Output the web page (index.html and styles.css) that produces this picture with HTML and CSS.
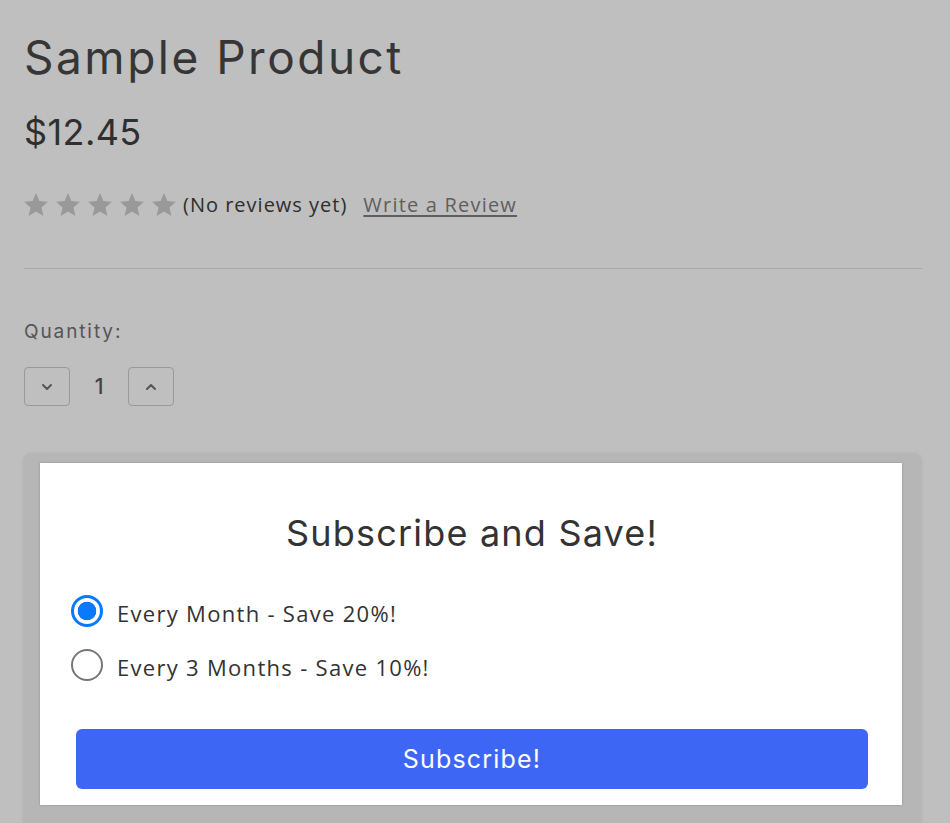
FILE: index.html
```html
<!DOCTYPE html>
<html lang="en">
<head>
<meta charset="utf-8">
<title>Sample Product</title>
<link rel="stylesheet" href="styles.css">
</head>
<body>
<main class="product">
  <h1 class="product-title">Sample Product</h1>
  <div class="product-price">$12.45</div>
  <div class="rating">
    <div class="stars">
      <svg class="star" viewBox="2 2 20 19"><path d="M12 17.27L18.18 21l-1.64-7.03L22 9.24l-7.19-.61L12 2 9.19 8.63 2 9.24l5.46 4.73L5.82 21z"/></svg>
      <svg class="star" viewBox="2 2 20 19"><path d="M12 17.27L18.18 21l-1.64-7.03L22 9.24l-7.19-.61L12 2 9.19 8.63 2 9.24l5.46 4.73L5.82 21z"/></svg>
      <svg class="star" viewBox="2 2 20 19"><path d="M12 17.27L18.18 21l-1.64-7.03L22 9.24l-7.19-.61L12 2 9.19 8.63 2 9.24l5.46 4.73L5.82 21z"/></svg>
      <svg class="star" viewBox="2 2 20 19"><path d="M12 17.27L18.18 21l-1.64-7.03L22 9.24l-7.19-.61L12 2 9.19 8.63 2 9.24l5.46 4.73L5.82 21z"/></svg>
      <svg class="star" viewBox="2 2 20 19"><path d="M12 17.27L18.18 21l-1.64-7.03L22 9.24l-7.19-.61L12 2 9.19 8.63 2 9.24l5.46 4.73L5.82 21z"/></svg>
    </div>
    <span class="review-count">(No reviews yet)</span>
    <a class="review-link" href="#">Write a Review</a>
  </div>
  <hr class="divider">
  <div class="quantity">
    <label class="quantity-label">Quantity:</label>
    <div class="quantity-control">
      <button class="qty-btn" type="button" aria-label="Decrease">
        <svg viewBox="0 0 12 8"><path d="M2 2l4 4 4-4"/></svg>
      </button>
      <span class="qty-value">1</span>
      <button class="qty-btn" type="button" aria-label="Increase">
        <svg viewBox="0 0 12 8"><path d="M2 6l4-4 4 4"/></svg>
      </button>
    </div>
  </div>
  <section class="subscribe-panel">
    <div class="subscribe-card">
      <h2 class="subscribe-title">Subscribe and Save!</h2>
      <label class="option">
        <input type="radio" name="plan" checked>
        <span>Every Month - Save 20%!</span>
      </label>
      <label class="option">
        <input type="radio" name="plan">
        <span>Every 3 Months - Save 10%!</span>
      </label>
      <button class="subscribe-btn" type="button">Subscribe!</button>
    </div>
  </section>
</main>
</body>
</html>
```
FILE: styles.css
```css
html, body {
  margin: 0;
  padding: 0;
  background: #bfbfbf;
  overflow: hidden;
}
body {
  font-family: "Inter", "Open Sans", sans-serif;
  color: #333;
}
.product {
  padding: 0 28px 0 24px;
}
.product-title {
  margin: 29px 0 0;
  font-family: "Inter", sans-serif;
  font-weight: 400;
  font-size: 46px;
  line-height: 56px;
  letter-spacing: 2.5px;
  color: #363636;
}
.product-price {
  margin-top: 25px;
  font-size: 36px;
  line-height: 44px;
  letter-spacing: 0.4px;
  color: #2f2f2f;
}
.rating {
  margin-top: 38px;
  height: 24px;
  display: flex;
  align-items: center;
}
.stars {
  display: flex;
  gap: 8px;
}
.star {
  flex: none;
  width: 24px;
  height: 23px;
  fill: #999;
}
.review-count {
  margin-left: 7px;
  font-family: "Open Sans", sans-serif;
  font-size: 20px;
  letter-spacing: 1px;
  color: #2e2e2e;
}
.review-link {
  margin-left: 16px;
  font-family: "Open Sans", sans-serif;
  font-size: 20px;
  letter-spacing: 1.2px;
  color: #5e5e5e;
  text-decoration: underline;
  text-underline-offset: 3px;
}
.divider {
  margin: 52px 0 0;
  border: 0;
  height: 1px;
  background: #a9a9a9;
}
.quantity {
  margin-top: 52px;
}
.quantity-label {
  display: block;
  font-size: 19px;
  line-height: 22px;
  letter-spacing: 1.9px;
  color: #555;
}
.quantity-control {
  margin-top: 24px;
  display: flex;
  align-items: center;
}
.qty-btn {
  width: 46px;
  height: 39px;
  padding: 0;
  border: 1.5px solid #999;
  border-radius: 4px;
  background: transparent;
  display: flex;
  align-items: center;
  justify-content: center;
}
.qty-btn svg {
  width: 12px;
  height: 8px;
  fill: none;
  stroke: #555;
  stroke-width: 2;
  stroke-linecap: round;
  stroke-linejoin: round;
}
.qty-value {
  width: 58px;
  text-align: center;
  font-size: 21px;
  font-weight: 500;
  color: #444;
}
.subscribe-panel {
  margin: 47px 0 0 -1px;
  padding: 10px 20px 40px 17px;
  background: #b6b6b6;
  border-radius: 8px;
  box-shadow: 0 0 3px #b6b6b6;
}
.subscribe-card {
  background: #fff;
  padding: 48px 34px 16px 36px;
  box-shadow: 0 0 2px rgba(0, 0, 0, 0.25);
}
.subscribe-title {
  margin: 0 0 29px;
  text-align: center;
  font-weight: 400;
  font-size: 36px;
  line-height: 44px;
  letter-spacing: 1.2px;
  color: #333;
}
.option {
  margin-left: -5px;
  height: 54px;
  display: flex;
  align-items: center;
  gap: 14px;
  font-family: "Open Sans", sans-serif;
  font-size: 22px;
  letter-spacing: 1.3px;
  color: #333;
}
.option span {
  padding-top: 4px;
}
.option input {
  appearance: none;
  margin: 0;
  width: 32px;
  height: 32px;
  border-radius: 50%;
  border: 2.5px solid #777;
  background: #fff;
  flex: none;
}
.option input:checked {
  border: 3px solid #0a78ff;
  background: radial-gradient(circle, #0a78ff 0 9px, #fff 9.6px);
}
.subscribe-btn {
  margin-top: 37px;
  width: 100%;
  height: 60px;
  border: 0;
  border-radius: 6px;
  background: #3e66f5;
  color: #fff;
  font-family: "Inter", sans-serif;
  font-size: 25px;
  letter-spacing: 1.2px;
}
```
